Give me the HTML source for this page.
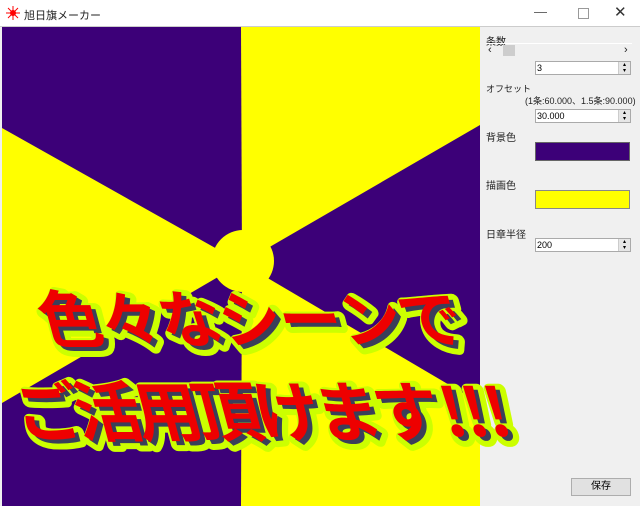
<!DOCTYPE html>
<html><head><meta charset="utf-8"><style>
body{margin:0;width:640px;height:506px;overflow:hidden;background:#f0f0f0;font-family:"Liberation Sans","Noto Sans CJK JP",sans-serif;position:relative}
.t{position:absolute;font-size:10px;color:#222}
.box{position:absolute;background:#fff;border:1px solid #aaa;height:12px;font-size:9px;line-height:12px;padding-left:1px;box-sizing:content-box}
.sp{position:absolute;right:0;top:0;width:11px;height:12px;background:#e6e6e6;border-left:1px solid #ccc;font-size:6px;line-height:6px;text-align:center}
.big{font-family:"Noto Sans CJK JP","Noto Sans CJK SC",sans-serif;font-weight:700;font-style:normal;stroke-linejoin:round}
</style></head><body>
<div style="position:absolute;left:0;top:0;width:640px;height:26px;background:#fff;border-bottom:1px solid #ccc"></div>
<svg style="position:absolute;left:6px;top:6px" width="14" height="14" viewBox="0 0 14 14"><g stroke="#f00" stroke-width="1"><line x1="7" y1="0" x2="7" y2="14"/><line x1="0" y1="7" x2="14" y2="7"/><line x1="2" y1="2" x2="12" y2="12"/><line x1="12" y1="2" x2="2" y2="12"/></g><circle cx="7" cy="7" r="3" fill="#f00"/></svg>
<div class="t" style="left:24px;top:7px;font-size:11px">旭日旗メーカー</div>
<div class="t" style="left:534px;top:4px;font-size:13px;color:#555">—</div>
<div style="position:absolute;left:578px;top:8px;width:9px;height:9px;border:1px solid #999"></div>
<div class="t" style="left:614px;top:3px;font-size:15px;color:#333">✕</div>
<svg style="position:absolute;left:2px;top:27px" width="478" height="479">
<rect width="478" height="479" fill="#3c0078"/>
<polygon points="239,0 478,0 478,98 240,236" fill="#ffff00"/>
<polygon points="0,101 240,236 0,376" fill="#ffff00"/>
<polygon points="240,236 478,376 478,479 239,479" fill="#ffff00"/>
<circle cx="241" cy="234" r="31" fill="#ffff00"/>
</svg>
<svg style="position:absolute;left:0;top:0" width="640" height="506">
<g class="big">
<g font-size="62" transform="translate(-4,318) skewX(15) translate(0,-318)">
<text x="47 107 167 227 287 347 407" y="346" fill="#ccff00" stroke="#ccff00" stroke-width="12">色々なシーンで</text>
<text x="47 107 167 227 287 347 407" y="346" fill="#3a3f5a">色々なシーンで</text>
<text x="43 103 163 223 283 343 403" y="342" fill="#ee0000">色々なシーンで</text>
</g>
<g font-size="66" transform="translate(-4,410) skewX(15) translate(0,-410)">
<text x="22 82 142 202 262 322 382 448 470 492" y="440" fill="#ccff00" stroke="#ccff00" stroke-width="12">ご活用頂けます!!!</text>
<text x="22 82 142 202 262 322 382 448 470 492" y="440" fill="#3a3f5a">ご活用頂けます!!!</text>
<text x="18 78 138 198 258 318 378 444 466 488" y="436" fill="#ee0000">ご活用頂けます!!!</text>
</g></g></svg>
<div class="t" style="left:486px;top:33px">条数</div>
<div style="position:absolute;left:486px;top:43px;width:146px;height:1px;background:#fff"></div>
<div class="t" style="left:488px;top:44px;font-size:11px">‹</div>
<div style="position:absolute;left:503px;top:45px;width:12px;height:11px;background:#cdcdcd"></div>
<div class="t" style="left:624px;top:44px;font-size:11px">›</div>
<div class="box" style="left:535px;top:61px;width:93px">3<div class="sp">▴<br>▾</div></div>
<div class="t" style="left:486px;top:82px;font-size:9px">オフセット</div>
<div class="t" style="left:525px;top:94px;font-size:9px">(1条:60.000、1.5条:90.000)</div>
<div class="box" style="left:535px;top:109px;width:93px">30.000<div class="sp">▴<br>▾</div></div>
<div class="t" style="left:486px;top:129px">背景色</div>
<div style="position:absolute;left:535px;top:142px;width:93px;height:17px;background:#3c0078;border:1px solid #666"></div>
<div class="t" style="left:486px;top:177px">描画色</div>
<div style="position:absolute;left:535px;top:190px;width:93px;height:17px;background:#ffff00;border:1px solid #888"></div>
<div class="t" style="left:486px;top:226px">日章半径</div>
<div class="box" style="left:535px;top:238px;width:93px">200<div class="sp">▴<br>▾</div></div>
<div style="position:absolute;left:571px;top:478px;width:58px;height:16px;background:#e1e1e1;border:1px solid #adadad;font-size:10px;text-align:center;line-height:16px">保存</div>
</body></html>
